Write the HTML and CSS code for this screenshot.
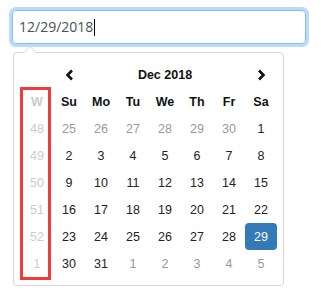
FILE: index.html
```html
<!DOCTYPE html>
<html>

<head>
    <title>Datepicker</title>

    <link rel="stylesheet" href="styles.css">
</head>

<body>

    <div class="field">
        <div class="date-input">12/29/2018<span class="cursor"></span></div>

        <div class="dropdown">
            <table class="cal">
                <thead>
                    <tr>
                        <th></th>
                        <th class="nav">
                            <svg width="9" height="12" viewBox="0 0 9 12"><path d="M7 1.5 L2.5 6 L7 10.5" /></svg>
                        </th>
                        <th colspan="5" class="title">Dec 2018</th>
                        <th class="nav">
                            <svg width="9" height="12" viewBox="0 0 9 12"><path d="M2 1.5 L6.5 6 L2 10.5" /></svg>
                        </th>
                    </tr>
                    <tr class="dow">
                        <th class="cw">W</th>
                        <th>Su</th><th>Mo</th><th>Tu</th><th>We</th><th>Th</th><th>Fr</th><th>Sa</th>
                    </tr>
                </thead>
                <tbody id="days"></tbody>
            </table>

            <!-- annotation box round the week column -->
            <div class="mark"></div>
        </div>
    </div>

    <script>
        // weeks of Dec 2018, with week number first
        let weeks = [
            [48, 25, 26, 27, 28, 29, 30, 1],
            [49, 2, 3, 4, 5, 6, 7, 8],
            [50, 9, 10, 11, 12, 13, 14, 15],
            [51, 16, 17, 18, 19, 20, 21, 22],
            [52, 23, 24, 25, 26, 27, 28, 29],
            [1, 30, 31, 1, 2, 3, 4, 5]
        ];

        let html = weeks.map((week, w) => {
            return '<tr>' + week.map((day, i) => {
                if (i == 0) return '<td class="cw">' + day + '</td>';
                let cls = '';
                if (w == 0 && i < 7) cls = 'old';
                if (w == 5 && i > 2) cls = 'new';
                if (w == 4 && i == 7) cls = 'active';
                return '<td class="' + cls + '">' + day + '</td>';
            }).join('') + '</tr>';
        }).join('');

        document.querySelector('#days').innerHTML = html;
    </script>
</body>

</html>
```

FILE: styles.css
```css
body {
    margin: 0;
    background: #fff;
}

.field {
    padding: 10px 12px;
}

/**
 * The focused text box
 */
.date-input {
    box-sizing: border-box;
    width: 294px;
    height: 34px;
    padding: 0 6px;
    border: 1px solid #80bdff;
    border-radius: 4px;
    box-shadow: 0 0 0 3px rgba(0, 123, 255, .28);
    font-family: "Open Sans", sans-serif;
    font-size: 14px;
    line-height: 32px;
    color: #495057;
    display: flex;
    align-items: center;
}

.cursor {
    display: inline-block;
    width: 1px;
    height: 17px;
    margin-left: 1px;
    background: #000;
}

/**
 * The calendar dropdown
 */
.dropdown {
    position: relative;
    width: 271px;
    box-sizing: border-box;
    margin: 8px 0 0 1px;
    padding: 8px 6px 8px 7px;
    border: 1px solid #d6d6d6;
    border-radius: 4px;
    background: #fff;
}

.dropdown:before,
.dropdown:after {
    content: '';
    position: absolute;
    border-left: 7px solid transparent;
    border-right: 7px solid transparent;
}

.dropdown:before {
    top: -7px;
    left: 9px;
    border-bottom: 7px solid #d6d6d6;
}

.dropdown:after {
    top: -6px;
    left: 10px;
    border-left-width: 6px;
    border-right-width: 6px;
    border-bottom: 6px solid #fff;
}

.cal {
    border-collapse: collapse;
    font-family: "Liberation Sans", Arial, sans-serif;
    font-size: 12.5px;
    color: #222;
}

.cal th,
.cal td {
    width: 32px;
    height: 27px;
    padding: 0;
    text-align: center;
}

.cal th {
    font-weight: bold;
    color: #111;
}

.nav svg {
    display: block;
    margin: 0 auto;
}

.nav path {
    fill: none;
    stroke: #111;
    stroke-width: 2.6;
}

.cal .cw {
    color: #ccc;
}

.cal .old,
.cal .new {
    color: #999;
}

.cal .active {
    background: #337ab7;
    color: #fff;
    border-radius: 4px;
}

.mark {
    position: absolute;
    left: 6px;
    top: 34px;
    width: 31px;
    height: 193px;
    box-sizing: border-box;
    border: 3px solid #ef3b3b;
}
```
